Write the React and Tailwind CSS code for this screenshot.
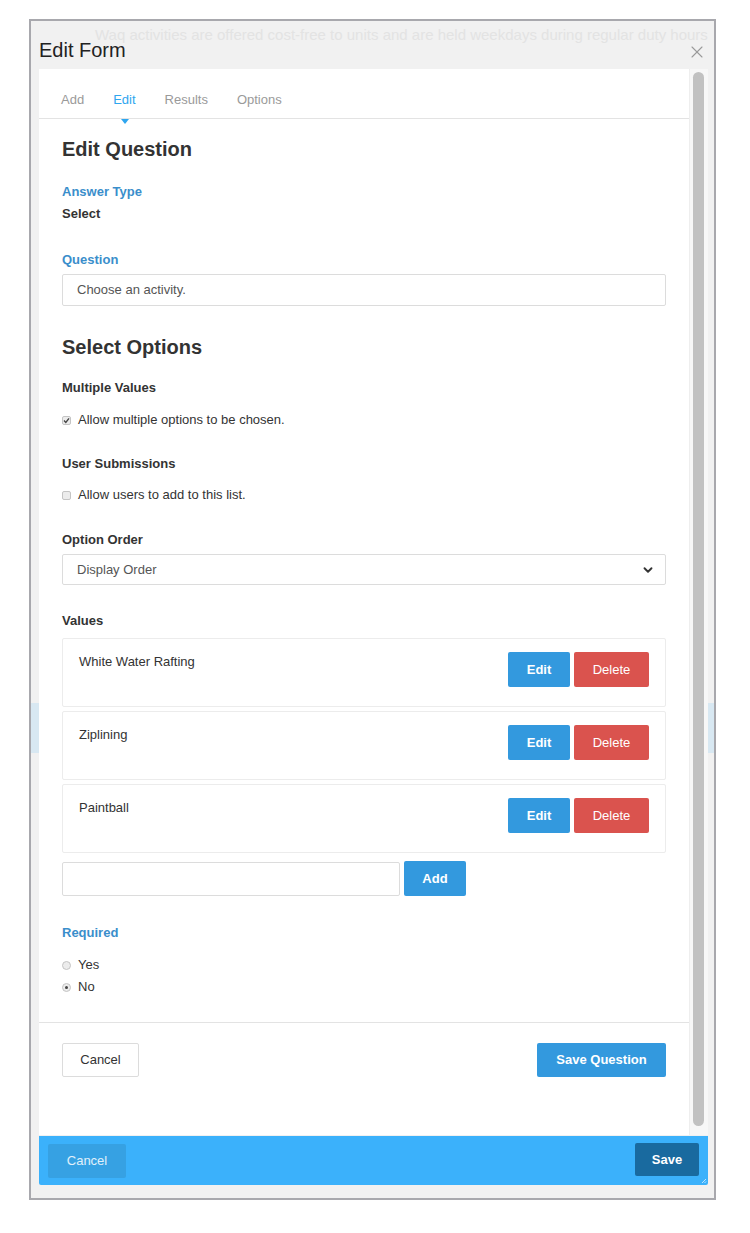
import { ChevronDown, X } from 'lucide-react';

const values = ['White Water Rafting', 'Ziplining', 'Paintball'];

const Label = ({ children, blue, className = '' }) => (
    <div className={`h-[18px] leading-[18px] text-[13px] font-bold ${blue ? 'text-[#3a8ecb]' : 'text-[#333]'} ${className}`}>
        {children}
    </div>
);

const Check = ({ checked, label, className = '' }) => (
    <div className={`flex items-center h-[18px] ${className}`}>
        <span className="w-[9px] h-[9px] rounded-[2px] border border-[#c4c4c4] bg-[#ececec] flex items-center justify-center">
            {checked && (
                <svg width="7" height="7" viewBox="0 0 7 7">
                    <path d="M1 3.6 L2.8 5.4 L6 1.4" fill="none" stroke="#444" strokeWidth="1.4" />
                </svg>
            )}
        </span>
        <span className="ml-[7px] text-[13px] text-[#333]">{label}</span>
    </div>
);

const Radio = ({ checked, label, className = '' }) => (
    <div className={`flex items-center h-[18px] ${className}`}>
        <span className="w-[9px] h-[9px] rounded-full border border-[#c4c4c4] bg-[#ececec] flex items-center justify-center">
            {checked && <span className="w-[3px] h-[3px] rounded-full bg-[#444]" />}
        </span>
        <span className="ml-[7px] text-[13px] text-[#333]">{label}</span>
    </div>
);

export default function App() {
    return (
        <div className="w-[750px] h-[1233px] bg-white pl-[29px] pt-[19px] font-['Liberation_Sans',Arial,sans-serif]">
            <div className="relative w-[687px] h-[1181px] border-2 border-[#a8a8ad] bg-[#f1f1f1] flex flex-col">
                {/* page behind, showing through */}
                <div className="absolute left-0 top-[682px] w-[8px] h-[50px] bg-[#d8e8f2]" />
                <div className="absolute right-0 top-[682px] w-[6px] h-[50px] bg-[#d8e8f2]" />

                {/* header */}
                <div className="relative h-[48px] pl-[8px] overflow-hidden">
                    <div className="absolute left-[64px] top-[3px] whitespace-nowrap text-[15px] text-[#e3e3e3]">
                        Waq activities are offered cost-free to units and are held weekdays during regular duty hours
                    </div>
                    <div className="relative pt-[17px] text-[20px] leading-[24px] text-[#222]">Edit Form</div>
                    <X className="absolute right-[7px] top-[21px] w-[20px] h-[20px] text-[#9a9a9a]" strokeWidth={1.3} />
                </div>

                {/* body */}
                <div className="flex pl-[8px] pr-[6px] h-[1066px]">
                    <div className="w-[650px] bg-white flex flex-col">
                        {/* tabs */}
                        <div className="relative h-[50px] border-b border-[#e3e3e3] flex items-end pb-[9px] pl-[22px] gap-[29px] text-[13px] text-[#9a9a9a]">
                            <span>Add</span>
                            <span className="text-[#2fa6ef]">Edit</span>
                            <span>Results</span>
                            <span>Options</span>
                            <svg className="absolute left-[82px] top-[50px]" width="8" height="5" viewBox="0 0 8 5">
                                <path d="M0 0 L8 0 L4 5 Z" fill="#2fa6ef" />
                            </svg>
                        </div>

                        {/* form */}
                        <div className="px-[23px] pt-[18px] pb-[26px] border-b border-[#e3e3e3]">
                            <h2 className="text-[20px] leading-[24px] font-bold text-[#333]">Edit Question</h2>
                            <Label blue className="mt-[22px]">Answer Type</Label>
                            <Label className="mt-[4px] text-[#222]">Select</Label>

                            <Label blue className="mt-[28px]">Question</Label>
                            <div className="mt-[5px] h-[32px] border border-[#dcdcdc] rounded-[2px] px-[14px] flex items-center text-[13px] text-[#555]">
                                Choose an activity.
                            </div>

                            <h2 className="mt-[29px] text-[20px] leading-[24px] font-bold text-[#333]">Select Options</h2>
                            <Label className="mt-[20px]">Multiple Values</Label>
                            <Check checked label="Allow multiple options to be chosen." className="mt-[14px]" />
                            <Label className="mt-[26px]">User Submissions</Label>
                            <Check label="Allow users to add to this list." className="mt-[13px]" />

                            <Label className="mt-[27px]">Option Order</Label>
                            <div className="mt-[5px] h-[31px] border border-[#dcdcdc] rounded-[2px] pl-[14px] pr-[10px] flex items-center justify-between text-[13px] text-[#555]">
                                <span>Display Order</span>
                                <ChevronDown className="w-[14px] h-[14px] text-[#333]" strokeWidth={3.2} />
                            </div>

                            <Label className="mt-[27px]">Values</Label>
                            <div className="mt-[8px] flex flex-col gap-[4px]">
                                {values.map((v) => (
                                    <div key={v} className="h-[69px] border border-[#ececec] rounded-[2px] pl-[16px] pr-[16px] pt-[13px] flex justify-between items-start">
                                        <span className="mt-[1px] text-[13px] leading-[18px] text-[#333]">{v}</span>
                                        <div className="flex gap-[4px]">
                                            <button className="w-[62px] h-[35px] rounded-[2px] bg-[#3399de] text-white text-[13px] font-bold">Edit</button>
                                            <button className="w-[75px] h-[35px] rounded-[2px] bg-[#da534e] text-white text-[13px]">Delete</button>
                                        </div>
                                    </div>
                                ))}
                            </div>

                            <div className="mt-[8px] flex items-start gap-[4px]">
                                <div className="mt-[1px] w-[338px] h-[34px] border border-[#dcdcdc] rounded-[2px]" />
                                <button className="w-[62px] h-[35px] rounded-[2px] bg-[#3399de] text-white text-[13px] font-bold">Add</button>
                            </div>

                            <Label blue className="mt-[28px]">Required</Label>
                            <Radio label="Yes" className="mt-[14px]" />
                            <Radio checked label="No" className="mt-[4px]" />
                        </div>

                        {/* question actions */}
                        <div className="px-[23px] pt-[20px] flex justify-between">
                            <button className="w-[77px] h-[34px] border border-[#dcdcdc] rounded-[2px] bg-white text-[13px] text-[#333]">Cancel</button>
                            <button className="w-[129px] h-[34px] rounded-[2px] bg-[#3399de] text-white text-[13px] font-bold">Save Question</button>
                        </div>
                    </div>

                    {/* scrollbar */}
                    <div className="w-[19px] bg-[#f7f7f7] border-l border-[#eeeeee] pl-[3px] pt-[3px] pb-[9px]">
                        <div className="w-[11px] h-full rounded-full bg-[#c1c1c1]" />
                    </div>
                </div>

                {/* footer */}
                <div className="mx-[6px] ml-[8px] mt-[1px] h-[49px] bg-[#3bb1fb] rounded-b-[2px] flex items-center justify-between pl-[9px] pr-[9px] relative">
                    <button className="w-[78px] h-[34px] rounded-[2px] bg-[#36a1e3] text-white/85 text-[13px]">Cancel</button>
                    <button className="-mt-[2px] w-[64px] h-[33px] rounded-[2px] bg-[#196a9f] text-white text-[13px] font-bold">Save</button>
                    <svg className="absolute right-[1px] bottom-[1px]" width="6" height="6" viewBox="0 0 6 6">
                        <path d="M1 5 L5 1 M3.5 5 L5 3.5" stroke="#dff1ff" strokeWidth="0.8" />
                    </svg>
                </div>
            </div>
        </div>
    );
}
